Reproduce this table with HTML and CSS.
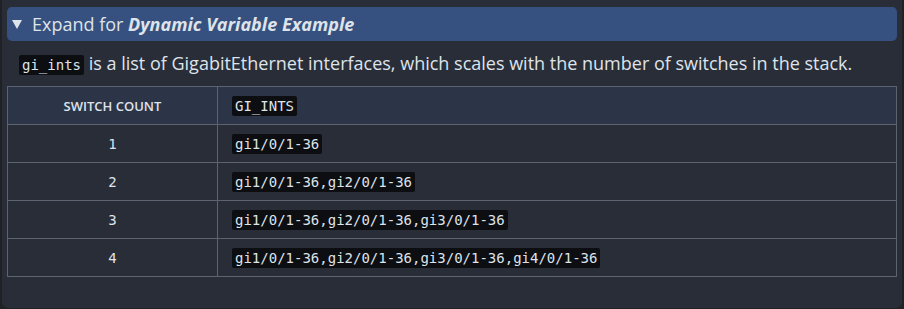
FILE: index.html
```html
<!DOCTYPE html>
<html lang="en">
<head>
    <meta charset="UTF-8">
    <title>Dynamic Variable Example</title>
    <link rel="stylesheet" href="styles.css">
</head>
<body>

<details class="admonition" open>
    <summary>Expand for <strong><em>Dynamic Variable Example</em></strong></summary>
    <p><code>gi_ints</code> is a list of GigabitEthernet interfaces, which scales with the number of switches in the stack.</p>
    <table>
        <thead>
            <tr>
                <th class="count">SWITCH COUNT</th>
                <th><code>GI_INTS</code></th>
            </tr>
        </thead>
        <tbody>
            <tr><td class="count">1</td><td><code>gi1/0/1-36</code></td></tr>
            <tr><td class="count">2</td><td><code>gi1/0/1-36,gi2/0/1-36</code></td></tr>
            <tr><td class="count">3</td><td><code>gi1/0/1-36,gi2/0/1-36,gi3/0/1-36</code></td></tr>
            <tr><td class="count">4</td><td><code>gi1/0/1-36,gi2/0/1-36,gi3/0/1-36,gi4/0/1-36</code></td></tr>
        </tbody>
    </table>
</details>

</body>
</html>
```

FILE: styles.css
```css
:root {
    --page-bg: #1f2125;
    --box-bg: #282d38;
    --summary-bg: #36517f;
    --head-bg: #2c3548;
    --border: #5d6370;
    --text: #dfe3ea;
    --code-bg: #0c0e12;
}

body {
    margin: 0;
    padding: 0 2px 3px;
    background-color: var(--page-bg);
    color: var(--text);
    font-family: 'Open Sans', 'Noto Sans', sans-serif;
}

.admonition {
    background-color: var(--box-bg);
    border-radius: 0 0 6px 6px;
    padding: 7px 5px 31px;
}

summary {
    list-style: none;
    background-color: var(--summary-bg);
    border-radius: 5px;
    height: 34px;
    line-height: 34px;
    padding-left: 5px;
    font-size: 18px;
    cursor: pointer;
}

summary::-webkit-details-marker {
    display: none;
}

summary::before {
    content: "";
    display: inline-block;
    border-left: 5px solid transparent;
    border-right: 5px solid transparent;
    border-top: 9px solid var(--text);
    margin-right: 10px;
    vertical-align: 2px;
}

summary strong {
    font-weight: 700;
}

p {
    margin: 10px 0 9px 12px;
    font-size: 18px;
    line-height: 24px;
}

code {
    font-family: 'DejaVu Sans Mono', monospace;
    font-size: 14px;
    background-color: var(--code-bg);
    padding: 2px 3px;
    border-radius: 2px;
}

table {
    width: 100%;
    border-collapse: collapse;
    border: 1px solid var(--border);
}

th, td {
    border: 1px solid var(--border);
    height: 37px;
    padding: 0 14px;
    text-align: left;
}

th {
    background-color: var(--head-bg);
    font-size: 13px;
    font-weight: 600;
}

th code {
    font-size: 14px;
    font-weight: 400;
}

td {
    font-size: 14px;
}

.count {
    width: 181px;
    text-align: center;
    font-family: 'DejaVu Sans Mono', monospace;
}

th.count {
    font-family: 'Open Sans', 'Noto Sans', sans-serif;
}
```
